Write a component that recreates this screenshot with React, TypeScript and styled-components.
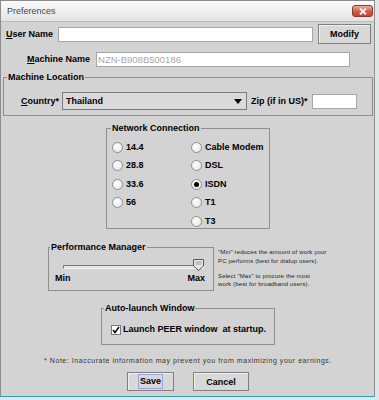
import React from 'react';
import styled, { createGlobalStyle } from 'styled-components';

const GlobalStyle = createGlobalStyle`
  html, body {
    margin: 0;
    padding: 0;
    background: #e2e7ea;
  }
  body {
    font-family: "Liberation Sans", Arial, sans-serif;
    color: #000;
  }
`;

const Window = styled.div`
  width: 375px;
  height: 397px;
  box-sizing: border-box;
  border: 1px solid #8c8c8c;
  border-bottom: 1px solid #2a9fb4;
  display: flex;
  flex-direction: column;
  background: #d3d3d3;
`;

const TitleBar = styled.div`
  height: 20px;
  border-bottom: 1px solid #bcbcbc;
  background: linear-gradient(#fbfbfb, #e3e3e3);
  display: flex;
  align-items: center;
  justify-content: space-between;
  padding: 0 1px 0 6px;
`;

const Title = styled.span`
  font-size: 9px;
  color: #4a4a4a;
`;

const CloseButton = styled.div`
  width: 21px;
  height: 12px;
  box-sizing: border-box;
  border: 1px solid #8b3a2e;
  border-radius: 3px;
  background: linear-gradient(#f2ad9e, #d65a45 55%, #c44431);
  display: flex;
  align-items: center;
  justify-content: center;
`;

const Body = styled.div`
  flex: 1;
  padding: 0 1px 0 2px;
  display: flex;
  flex-direction: column;
`;

const Label = styled.span`
  font-size: 9px;
  font-weight: bold;
  line-height: 11px;
  white-space: nowrap;
`;

const Mn = styled.span`
  text-decoration: underline;
`;

const UserRow = styled.div`
  display: flex;
  align-items: center;
  height: 20px;
  margin-top: 2px;
  padding-left: 3px;
`;

const TextField = styled.div<{ $w: number; $gap: number }>`
  width: ${p => p.$w}px;
  height: 15px;
  margin-left: ${p => p.$gap}px;
  box-sizing: border-box;
  background: #fff;
  border: 1px solid #a6a6a6;
  font-size: 9.5px;
  line-height: 13px;
  color: #a8a8a8;
  padding-left: 1px;
  white-space: nowrap;
`;

const Button = styled.div<{ $w: number; $h: number }>`
  width: ${p => p.$w}px;
  height: ${p => p.$h}px;
  box-sizing: border-box;
  border: 1px solid #808080;
  background: #d8d8d8;
  box-shadow: inset 1px 1px 0 #efefef;
  display: flex;
  align-items: center;
  justify-content: center;
  font-size: 9px;
  font-weight: bold;
`;

const MachineRow = styled.div`
  display: flex;
  align-items: center;
  height: 15px;
  margin-top: 8px;
  padding-left: 24px;
`;

const Group = styled.div<{ $mt: number; $w?: number }>`
  border: 1px solid #8e8e8e;
  margin: ${p => p.$mt}px ${p => (p.$w ? 'auto' : '0')} 0;
  width: ${p => (p.$w ? `${p.$w}px` : 'auto')};
  box-sizing: border-box;
`;

const Legend = styled.div<{ $indent: number }>`
  display: table;
  margin: -6px 0 0 ${p => p.$indent}px;
  padding: 0 1px;
  background: #d3d3d3;
  font-size: 9px;
  font-weight: bold;
  line-height: 11px;
`;

const CountryRow = styled.div`
  display: flex;
  align-items: center;
  height: 18px;
  margin: 9px 0 5px;
  padding-left: 17px;
`;

const Combo = styled.div`
  width: 185px;
  height: 18px;
  margin-left: 3px;
  box-sizing: border-box;
  border: 1px solid #7c7c7c;
  background: #dadada;
  display: flex;
  align-items: center;
  justify-content: space-between;
  padding: 0 4px 0 3px;
  font-size: 9px;
  font-weight: bold;
`;

const ZipLabel = styled(Label)`
  margin-left: 4px;
`;

const RadioArea = styled.div`
  display: flex;
  padding: 6px 0 0 5px;
`;

const RadioColumn = styled.div<{ $w?: number }>`
  display: flex;
  flex-direction: column;
  gap: 4.5px;
  width: ${p => (p.$w ? `${p.$w}px` : 'auto')};
`;

const RadioRow = styled.div`
  display: flex;
  align-items: center;
  height: 14px;
  gap: 3px;
`;

const RadioDot = styled.span<{ $on?: boolean }>`
  width: 11px;
  height: 11px;
  box-sizing: border-box;
  border-radius: 50%;
  border: 1px solid #8f8f8f;
  background: radial-gradient(circle at 40% 35%, #ffffff, #e2e2e2);
  display: flex;
  align-items: center;
  justify-content: center;
  &::after {
    content: '';
    width: 5px;
    height: 5px;
    border-radius: 50%;
    background: ${p => (p.$on ? '#000' : 'transparent')};
  }
`;

const PerfRow = styled.div`
  display: flex;
  justify-content: center;
  align-items: flex-start;
  gap: 4px;
  margin-top: 18px;
`;

const PerfGroup = styled.div`
  width: 166px;
  box-sizing: border-box;
  border: 1px solid #8e8e8e;
  padding: 0 8px 6px 6px;
`;

const SliderBox = styled.div`
  position: relative;
  height: 12px;
  margin: 6px 1px 0 8px;
`;

const Track = styled.div`
  position: relative;
  top: 6px;
  height: 4px;
  box-sizing: border-box;
  border: 1px solid #7a7a7a;
  border-bottom-color: #f2f2f2;
  border-right-color: #f2f2f2;
  background: #e4e4e4;
`;

const Thumb = styled.svg`
  position: absolute;
  top: 0;
`;

const ScaleLabels = styled.div`
  display: flex;
  justify-content: space-between;
  margin-top: 1.5px;
`;

const Notes = styled.div`
  width: 110px;
  margin-top: 1px;
  font-size: 6px;
  line-height: 8.5px;
  letter-spacing: 0.15px;
  color: #1e1e1e;
  white-space: nowrap;
  p {
    margin: 0;
  }
  p + p {
    margin-top: 6.5px;
  }
`;

const CheckRow = styled.div`
  display: flex;
  align-items: center;
  gap: 2px;
  height: 11px;
  margin: 10.5px 0 9px;
  padding-left: 9px;
`;

const CheckBox = styled.span`
  width: 10px;
  height: 10px;
  box-sizing: border-box;
  border: 1px solid #7a7a7a;
  background: #fff;
  display: flex;
  align-items: center;
  justify-content: center;
`;

const Note = styled.div`
  margin-top: 10.5px;
  text-align: center;
  font-size: 7px;
  line-height: 9px;
  letter-spacing: 0.55px;
  color: #333;
  white-space: nowrap;
`;

const ButtonRow = styled.div`
  display: flex;
  justify-content: center;
  gap: 19px;
  margin-top: 7.5px;
`;

const Focus = styled.span`
  border: 1px solid #a0a0e6;
  padding: 1px 1px;
  line-height: 11px;
`;

const leftSpeeds = ['14.4', '28.8', '33.6', '56'];
const rightSpeeds = ['Cable Modem', 'DSL', 'ISDN', 'T1', 'T3'];

const Radio = ({ label, on }: { label: string; on?: boolean }) => (
  <RadioRow>
    <RadioDot $on={on} />
    <Label>{label}</Label>
  </RadioRow>
);

export default function App() {
  const selected = 'ISDN';
  const perf = 100;

  return (
    <>
      <GlobalStyle />
      <Window>
        <TitleBar>
          <Title>Preferences</Title>
          <CloseButton>
            <svg width="8" height="7" viewBox="0 0 8 7">
              <path d="M1 0.5 L7 6.5 M7 0.5 L1 6.5" stroke="#fff" strokeWidth="1.8" />
            </svg>
          </CloseButton>
        </TitleBar>
        <Body>
          <UserRow>
            <Label><Mn>U</Mn>ser Name</Label>
            <TextField $w={255} $gap={5} />
            <Button $w={53} $h={20} style={{ marginLeft: 5 }}>Modify</Button>
          </UserRow>

          <MachineRow>
            <Label><Mn>M</Mn>achine Name</Label>
            <TextField $w={254} $gap={6}>NZN-B908B500186</TextField>
          </MachineRow>

          <Group $mt={10}>
            <Legend $indent={3}>Machine Location</Legend>
            <CountryRow>
              <Label><Mn>C</Mn>ountry*</Label>
              <Combo>
                <span>Thailand</span>
                <svg width="8" height="5" viewBox="0 0 8 5">
                  <path d="M0 0 H8 L4 5 Z" fill="#000" />
                </svg>
              </Combo>
              <ZipLabel>Zip (if in US)*</ZipLabel>
              <TextField $w={45} $gap={4} />
            </CountryRow>
          </Group>

          <Group $mt={12} $w={164}>
            <Legend $indent={4}>Network Connection</Legend>
            <RadioArea>
              <RadioColumn $w={79}>
                {leftSpeeds.map(s => (
                  <Radio key={s} label={s} on={s === selected} />
                ))}
              </RadioColumn>
              <RadioColumn>
                {rightSpeeds.map(s => (
                  <Radio key={s} label={s} on={s === selected} />
                ))}
              </RadioColumn>
            </RadioArea>
          </Group>

          <PerfRow>
            <PerfGroup>
              <Legend $indent={-5}>Performance Manager</Legend>
              <SliderBox>
                <Track />
                <Thumb
                  width="11"
                  height="12"
                  viewBox="0 0 11 12"
                  style={{ left: `calc(${perf}% - ${(perf * 11) / 100}px)` }}
                >
                  <path d="M0.5 0.5 H10.5 V7 L5.5 11.5 L0.5 7 Z" fill="#e6e6e6" stroke="#555" />
                  <path d="M2.5 3 H8.5 M2.5 5 H8.5" stroke="#9a9a9a" />
                </Thumb>
              </SliderBox>
              <ScaleLabels>
                <Label>Min</Label>
                <Label>Max</Label>
              </ScaleLabels>
            </PerfGroup>
            <Notes>
              <p>"Min" reduces the amount of work your<br />PC performs (best for dialup users).</p>
              <p>Select "Max" to procure the most<br />work (best for broadband users).</p>
            </Notes>
          </PerfRow>

          <Group $mt={17} $w={174}>
            <Legend $indent={2}>Auto-launch Window</Legend>
            <CheckRow>
              <CheckBox>
                <svg width="8" height="8" viewBox="0 0 8 8">
                  <path d="M1 4 L3 6.5 L7 1" stroke="#000" strokeWidth="1.5" fill="none" />
                </svg>
              </CheckBox>
              <Label>Launch PEER window&nbsp; at startup.</Label>
            </CheckRow>
          </Group>

          <Note>* Note: Inaccurate information may prevent you from maximizing your earnings.</Note>

          <ButtonRow>
            <Button $w={47} $h={19}><Focus>Save</Focus></Button>
            <Button $w={56} $h={19}>Cancel</Button>
          </ButtonRow>
        </Body>
      </Window>
    </>
  );
}
